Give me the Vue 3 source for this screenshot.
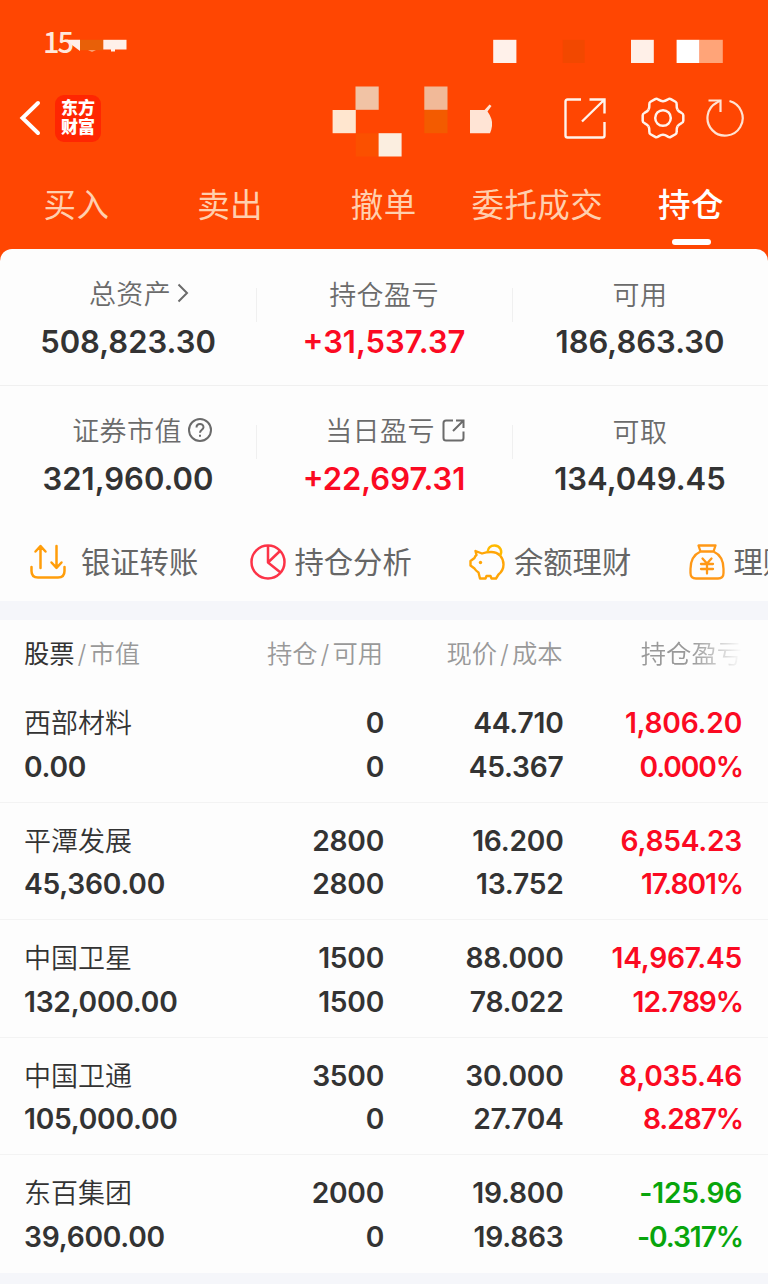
<template>
  <div class="page">
    <header class="header">
      <div class="status-bar">15</div>
      <svg class="mosaic" width="768" height="170" viewBox="0 0 768 170">
        <rect
          v-for="(b, i) in blocks"
          :key="i"
          :x="b[0]"
          :y="b[1]"
          :width="b[2]"
          :height="b[3]"
          :fill="b[4]"
        />
        <path d="M67 39.8H80V51L72 45Z" fill="#fff1ea" />
        <path d="M111 49H115V51.5H111Z" fill="#fff1ea" />
        <path d="M88 50H96L92 52Z" fill="#f9a070" />
        <path d="M470 110H484.500L489.500 104.500L491.500 106L487.500 111.500Q493 119 492 126Q491.500 130 490 133.300H470Z" fill="#ffe4d5" />
      </svg>

      <div class="nav">
        <svg class="back" width="22" height="36" viewBox="0 0 22 36">
          <path d="M19 3L3.500 18L19 33" fill="none" stroke="#fff" stroke-width="4" stroke-linecap="round" />
        </svg>
        <div class="logo"><span>东方</span><span>财富</span></div>
        <div class="nav-icons">
          <svg width="42" height="42" viewBox="0 0 42 42" fill="none" stroke="#fff3ec" stroke-width="2.400">
            <path d="M17 2.500H3.500Q1.500 2.500 1.500 4.500V38.500Q1.500 40.500 3.500 40.500H38.500Q40.500 40.500 40.500 38.500V25" />
            <path d="M25.500 2.500H40.500V16.500M40 3L18 24.500" />
          </svg>
          <svg class="gear" width="46" height="46" viewBox="-23 -23 46 46" fill="none" stroke="#fff3ec" stroke-width="2.500">
            <path
              v-for="n in 6"
              :key="n"
              :transform="`rotate(${n * 60})`"
              d="M14.500 -8.400C15.500 -6.500 17.200 -5.800 18.700 -5Q20.300 -4.200 20.300 -2.700V2.700Q20.300 4.200 18.700 5C17.200 5.800 15.500 6.500 14.500 8.400"
            />
            <circle r="7.800" />
          </svg>
          <svg class="refresh" width="40" height="40" viewBox="-20 -20 40 40" fill="none" stroke="#ffe2d2" stroke-width="2.200">
            <path d="M4.500 -17A17.600 17.600 0 1 1 -8 -15.600L-5 -17.300" />
            <path d="M-16.500 -17.500H-4.500V-6" />
          </svg>
        </div>
      </div>

      <nav class="tabs">
        <div v-for="tab in tabs" :key="tab" class="tab" :class="{ active: tab === activeTab }" @click="activeTab = tab">
          {{ tab }}
        </div>
      </nav>
    </header>

    <main class="panel">
      <section class="summary">
        <div v-for="item in summary" :key="item.label" class="cell">
          <div class="cell-label" :class="{ raised: item.icon }">
            <span>{{ item.label }}</span>
            <svg v-if="item.icon === 'arrow'" class="i-arrow" width="12" height="20" viewBox="0 0 12 20">
              <path d="M1.500 1.500L10 10L1.500 18.500" />
            </svg>
            <svg v-else-if="item.icon === 'help'" class="i-help" width="24" height="24" viewBox="0 0 24 24">
              <circle cx="12" cy="12" r="11" />
              <path d="M8.500 9.500C8.500 4.800 15.500 4.800 15.500 9.300C15.500 11.800 12 11.800 12 14.800M12 16.800V18.800" />
            </svg>
            <svg v-else-if="item.icon === 'open'" class="i-open" width="23" height="23" viewBox="0 0 23 23">
              <path d="M11 1.500H4Q1.500 1.500 1.500 4V19Q1.500 21.500 4 21.500H19Q21.500 21.500 21.500 19V12.500M14 1.500H21.500V9M21 2L11 12" />
            </svg>
          </div>
          <div class="cell-value" :class="{ up: item.value.startsWith('+') }">{{ item.value }}</div>
        </div>
      </section>

      <section class="actions">
        <div class="action wide">
          <svg width="36" height="36" viewBox="0 0 36 36" fill="none" stroke="#ff9d0a" stroke-width="2.500" stroke-linecap="round" stroke-linejoin="round">
            <path d="M1.500 23V27Q1.500 33.500 8 33.500H28Q34.500 33.500 34.500 27V23" />
            <path d="M10.500 24V2.500M5.500 7.500L10.500 2L15.500 7.500M26.500 2V23.500M21.500 18.500L26.500 23.800L31.500 18.500" />
          </svg>
          <span>银证转账</span>
        </div>
        <div class="action">
          <svg width="36" height="36" viewBox="0 0 36 36" fill="none" stroke="#fc3347" stroke-width="2.500" stroke-linejoin="round">
            <circle cx="18" cy="18" r="16.500" />
            <path d="M18 1.500V18.500L30 7M18 18.500L30.500 28.500" />
          </svg>
          <span>持仓分析</span>
        </div>
        <div class="action">
          <svg width="36" height="36" viewBox="0 0 36 36" fill="none" stroke="#ffa507" stroke-width="2.400" stroke-linejoin="round">
            <path d="M6.500 7L13 9.500Q17 8 22 8C30 8 34.500 14 34.500 20.500C34.500 25 32 28.500 29.500 30.500L27 34.500H22.500L21.500 32H17.500L16.500 34.500H11L9.500 28.500Q7 27 5.500 24.500L1.500 21.500V17L5.500 14Q6 12 7.500 11Z" />
            <path d="M18.500 8Q19.500 1.500 25.500 1.500C31 1.500 34 7 31 11.500" stroke="#ffba00" />
            <circle cx="11.500" cy="18.500" r="1.700" fill="#ffa507" stroke="none" />
          </svg>
          <span>余额理财</span>
        </div>
        <div class="action">
          <svg width="36" height="36" viewBox="0 0 36 36" fill="none" stroke="#ff9816" stroke-width="2.300" stroke-linejoin="round" stroke-linecap="round">
            <path d="M11.500 7.500L9.500 1.500H26.500L24.500 7.500M11.500 7.500H24.500C31 10.500 34.500 17 34.500 25V29Q34.500 34.500 29 34.500H7Q1.500 34.500 1.500 29V25C1.500 17 5 10.500 11.500 7.500Z" />
            <path d="M13.500 14.500L18 19.500L22.500 14.500M18 19.500V29.500M12 20H24M12 25H24" />
          </svg>
          <span>理财</span>
        </div>
      </section>

      <section class="holdings">
        <div class="holdings-head">
          <div><b>股票</b><i>/</i>市值</div>
          <div>持仓<i>/</i>可用</div>
          <div>现价<i>/</i>成本</div>
          <div class="fade">持仓盈亏</div>
        </div>
        <div v-for="s in stocks" :key="s.name" class="row">
          <div class="col">
            <span class="name">{{ s.name }}</span>
            <span>{{ s.market }}</span>
          </div>
          <div class="col">
            <span>{{ s.held }}</span>
            <span>{{ s.available }}</span>
          </div>
          <div class="col">
            <span>{{ s.price }}</span>
            <span>{{ s.cost }}</span>
          </div>
          <div class="col" :class="s.profit.startsWith('-') ? 'down' : 'up'">
            <span>{{ s.profit }}</span>
            <span class="rate">{{ s.rate }}</span>
          </div>
        </div>
      </section>
    </main>
  </div>
</template>

<script setup>
import { ref } from 'vue'

const tabs = ['买入', '卖出', '撤单', '委托成交', '持仓']
const activeTab = ref('持仓')

// x, y, width, height, colour
const blocks = [
  [80, 39.8, 23.3, 10.4, '#e86008'],
  [103.3, 39.8, 23.2, 9.7, '#fff1ea'],
  [493.2, 39.8, 23.2, 23.2, '#fff1ea'],
  [562.7, 39.8, 22, 23.2, '#f24800'],
  [631, 39.8, 22.8, 23.2, '#fff0e8'],
  [676.6, 39.8, 23, 23.2, '#ffffff'],
  [699.6, 39.8, 23.2, 23.2, '#ffa478'],
  [355.5, 86.5, 23.2, 23.3, '#f1c3a5'],
  [332.6, 110, 23.2, 23.2, '#ffe6cf'],
  [355.8, 133.2, 22.8, 23.3, '#fb5000'],
  [378.6, 133.2, 23, 23.3, '#fbeee0'],
  [424.3, 86.5, 23.2, 23.3, '#f1b998'],
  [424.3, 110, 23.2, 23.2, '#f35b00'],
]

const summary = [
  { label: '总资产', value: '508,823.30', icon: 'arrow' },
  { label: '持仓盈亏', value: '+31,537.37' },
  { label: '可用', value: '186,863.30' },
  { label: '证券市值', value: '321,960.00', icon: 'help' },
  { label: '当日盈亏', value: '+22,697.31', icon: 'open' },
  { label: '可取', value: '134,049.45' },
]

const stocks = [
  { name: '西部材料', market: '0.00', held: '0', available: '0', price: '44.710', cost: '45.367', profit: '1,806.20', rate: '0.000%' },
  { name: '平潭发展', market: '45,360.00', held: '2800', available: '2800', price: '16.200', cost: '13.752', profit: '6,854.23', rate: '17.801%' },
  { name: '中国卫星', market: '132,000.00', held: '1500', available: '1500', price: '88.000', cost: '78.022', profit: '14,967.45', rate: '12.789%' },
  { name: '中国卫通', market: '105,000.00', held: '3500', available: '0', price: '30.000', cost: '27.704', profit: '8,035.46', rate: '8.287%' },
  { name: '东百集团', market: '39,600.00', held: '2000', available: '0', price: '19.800', cost: '19.863', profit: '-125.96', rate: '-0.317%' },
]
</script>

<style>
body {
  background: #f5f6fa;
}
</style>

<style scoped>
.page {
  width: 768px;
  height: 1284px;
  overflow: hidden;
  background: #f5f6fa;
  color: #333;
  font-family: Inter, 'Noto Sans CJK SC', sans-serif;
}

svg {
  flex: none;
}

.header {
  position: relative;
  height: 261px;
  background: #ff4602;
}

.status-bar {
  height: 54px;
  padding: 25px 0 0 43px;
  box-sizing: border-box;
  font-family: 'Noto Sans CJK SC', sans-serif;
  font-size: 29px;
  font-weight: 500;
  line-height: 30px;
  letter-spacing: -2px;
  color: #ffe9dc;
}

.mosaic {
  position: absolute;
  top: 0;
  left: 0;
}

.nav {
  display: flex;
  align-items: center;
  height: 128px;
  padding: 0 23px 0 19px;
}

.logo {
  display: flex;
  flex-direction: column;
  align-items: center;
  justify-content: center;
  width: 46px;
  height: 47px;
  margin-left: 14px;
  border-radius: 9px;
  background: #ff2602;
  color: #fff;
  font-size: 17px;
  font-weight: 900;
  line-height: 19px;
}

.nav-icons {
  display: flex;
  align-items: center;
  margin-left: auto;
}

.gear {
  margin-left: 34px;
}

.refresh {
  margin-left: 19px;
}

.tabs {
  display: grid;
  grid-template-columns: repeat(5, 1fr);
}

.tab {
  display: flex;
  flex-direction: column;
  align-items: center;
  font-size: 32.5px;
  line-height: 48px;
  letter-spacing: 0.4px;
  text-indent: -0.6px;
  white-space: nowrap;
  color: #ffcfae;
}

.tab.active {
  color: #fff;
  font-weight: 500;
}

.tab.active::after {
  content: '';
  width: 39px;
  height: 6px;
  margin-top: 9px;
  border-radius: 3px;
  background: #fff;
}

.panel {
  position: relative;
  margin-top: -12px;
  border-radius: 12px 12px 0 0;
  background: #fdfdfd;
}

.summary {
  display: grid;
  grid-template-columns: repeat(3, 256px);
  grid-template-rows: 137px 137px;
}

.cell {
  display: flex;
  flex-direction: column;
  align-items: center;
  padding-top: 25px;
  border-bottom: 1px solid #f0f0f0;
  background: linear-gradient(#f0f0f0, #f0f0f0) no-repeat 0 39px / 1px 34px;
}

.cell:nth-child(3n + 1) {
  background: none;
}

.cell:nth-child(n + 4) {
  border-bottom: 0;
}

.cell-label {
  display: flex;
  align-items: center;
  height: 40px;
  font-size: 27px;
  font-weight: 350;
  letter-spacing: 0.4px;
  color: #6b6b6b;
}

.cell-label span {
  padding-bottom: 2px;
}

.cell-label.raised {
  height: 38px;
  margin-bottom: 2px;
  padding-left: 22px;
}

.cell-label svg {
  fill: none;
  stroke: #6b6b6b;
  stroke-width: 2;
}

.i-arrow {
  margin-left: 6px;
}

.i-help {
  margin: 0 -6px 0 6px;
}

.i-open {
  margin-left: 7px;
}

.cell-value {
  margin-top: 10px;
  font-size: 31px;
  font-weight: 600;
  line-height: 36px;
}

.up {
  color: #fb0a22;
}

.down {
  color: #08a50c;
}

.actions {
  display: flex;
  height: 78px;
  padding-left: 30px;
  overflow: hidden;
  border-bottom: 19px solid #f5f6fa;
}

.action {
  display: flex;
  flex: none;
  align-items: center;
  gap: 9px;
  width: 219.5px;
  font-size: 29.3px;
  line-height: 44px;
  color: #666;
  white-space: nowrap;
}

.action span {
  padding-top: 2px;
}

.action.wide {
  gap: 15px;
}

.holdings-head,
.row {
  display: grid;
  grid-template-columns: repeat(4, 1fr);
  padding: 0 26px 0 24px;
}

.holdings-head {
  height: 65px;
  font-size: 25.3px;
  line-height: 67px;
  font-weight: 350;
  color: #999;
}

.holdings-head div:not(:first-child) {
  text-align: right;
}

.holdings-head b {
  font-weight: 400;
  color: #333;
}

.holdings-head i {
  margin: 0 3px;
  font-style: normal;
}

.fade {
  mask-image: linear-gradient(to right, #000 72%, transparent 100%);
}

.row {
  height: 117.6px;
  box-sizing: border-box;
  padding-top: 17px;
  border-bottom: 1px solid #f3f3f3;
}

.row:last-child {
  border-bottom: 0;
}

.col {
  display: flex;
  flex-direction: column;
  align-items: flex-end;
  font-size: 28.2px;
  font-weight: 570;
  line-height: 43.5px;
  letter-spacing: -0.25px;
}

.col:first-child {
  align-items: flex-start;
}

.col:nth-child(2),
.col:nth-child(3) {
  margin-right: -1px;
}

.rate {
  margin-right: -1px;
  letter-spacing: -1.1px;
}

.name {
  font-size: 27px;
  font-weight: 350;
  letter-spacing: 0;
}
</style>
